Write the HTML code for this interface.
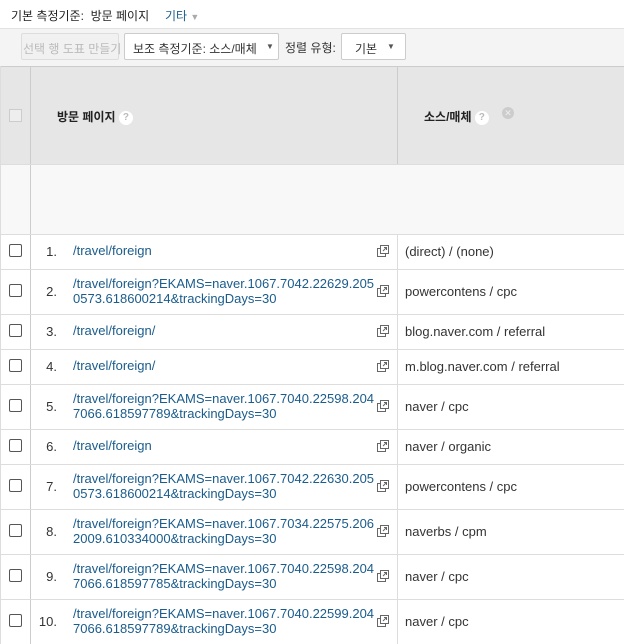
<!DOCTYPE html>
<html><head><meta charset="utf-8"><style>
*{margin:0;padding:0;box-sizing:border-box}
body{width:624px;height:644px;overflow:hidden;background:#fff;font-family:"Liberation Sans","Noto Sans CJK KR",sans-serif;font-size:13px;color:#222;position:relative}
.a{position:absolute;white-space:nowrap}
.kr{font-size:12px}
.cb{position:absolute;left:9px;width:13px;height:13px;border:1px solid #555;border-radius:2px;background:#fff}
.num{position:absolute;width:30px;text-align:right;left:27px;color:#333}
.lk{position:absolute;left:73px;color:#1a5c8c;line-height:15px;font-size:13px}
.src{position:absolute;left:405px;color:#333}
.ic{position:absolute;left:377px;width:12px;height:12px}
.hl{position:absolute;left:0;width:624px;height:1px;background:#ddd}
.btn{position:absolute;border:1px solid #ccc;border-radius:2px;background:#fff;height:27px;top:33px}
.q{display:inline-block;width:14px;height:14px;border-radius:50%;background:#fff;color:#bbb;font-size:10px;text-align:center;line-height:14px;vertical-align:middle}
</style></head><body>
<div class="a kr" style="left:11px;top:7px">기본 측정기준: &nbsp;<span style="color:#222">방문 페이지</span></div>
<div class="a kr" style="left:165px;top:7px;color:#1a5c8c">기타 <span style="color:#aaa;font-size:9px">▼</span></div>
<div class="a" style="left:0;top:28px;width:624px;height:1px;background:#e2e2e2"></div>
<div class="a" style="left:0;top:29px;width:624px;height:37px;background:#f4f4f4"></div>
<div class="btn" style="left:21px;width:98px;background:#f1f1f1;border-color:#ddd"><span class="a kr" style="left:1px;top:6px;color:#bbb">선택 행 도표 만들기</span></div>
<div class="btn" style="left:124px;width:155px"><span class="a kr" style="left:8px;top:6px;color:#333">보조 측정기준: 소스/매체</span><span class="a" style="left:141px;top:8px;font-size:8px;color:#555">▼</span></div>
<div class="a kr" style="left:285px;top:39px;color:#333">정렬 유형:</div>
<div class="btn" style="left:341px;width:65px"><span class="a kr" style="left:13px;top:6px;color:#333">기본</span><span class="a" style="left:45px;top:8px;font-size:8px;color:#555">▼</span></div>
<div class="a" style="left:0;top:66px;width:624px;height:98px;background:#e6e6e6;border-top:1px solid #ccc"></div>
<div class="a" style="left:0;top:164px;width:624px;height:70px;background:#f8f8f8"></div>
<div class="a" style="left:0;top:66px;width:1px;height:578px;background:#ddd"></div>
<div class="a" style="left:30px;top:66px;width:1px;height:578px;background:#ccc"></div>
<div class="a" style="left:397px;top:66px;width:1px;height:98px;background:#ccc"></div>
<div class="a" style="left:397px;top:234px;width:1px;height:410px;background:#ddd"></div>
<div class="a" style="left:9px;top:109px;width:13px;height:13px;border:1px solid #ccc;background:#eee"></div>
<div class="a kr" style="left:57px;top:108px;font-weight:bold;color:#222">방문 페이지 <span class="q">?</span></div>
<div class="a kr" style="left:424px;top:108px;font-weight:bold;color:#222">소스/매체 <span class="q">?</span></div>
<div class="a" style="left:502px;top:107px;width:12px;height:12px;border-radius:50%;background:#ccc;color:#eee;font-size:9px;text-align:center;line-height:12px">✕</div>
<div class="hl" style="top:164px"></div>
<div class="hl" style="top:234px"></div>
<div class="hl" style="top:269px"></div><div class="hl" style="top:314px"></div><div class="hl" style="top:349px"></div><div class="hl" style="top:384px"></div><div class="hl" style="top:429px"></div><div class="hl" style="top:464px"></div><div class="hl" style="top:509px"></div><div class="hl" style="top:554px"></div><div class="hl" style="top:599px"></div>

<div class="cb" style="top:244px"></div><div class="num" style="top:244px">1.</div><div class="lk" style="top:243px">/travel/foreign</div><svg class="ic" style="top:245px" viewBox="0 0 12 12"><rect x="0.5" y="3.5" width="8" height="8" fill="#fff" stroke="#666"/><rect x="3.5" y="0.5" width="8" height="8" fill="#fff" stroke="#666"/><path d="M6 6L9.5 2.5M7 2.5h2.5V5" stroke="#666" fill="none"/></svg><div class="src" style="top:244px">(direct) / (none)</div>

<div class="cb" style="top:284px"></div><div class="num" style="top:284px">2.</div><div class="lk" style="top:276px">/travel/foreign?EKAMS=naver.1067.7042.22629.205<br>0573.618600214&amp;trackingDays=30</div><svg class="ic" style="top:285px" viewBox="0 0 12 12"><rect x="0.5" y="3.5" width="8" height="8" fill="#fff" stroke="#666"/><rect x="3.5" y="0.5" width="8" height="8" fill="#fff" stroke="#666"/><path d="M6 6L9.5 2.5M7 2.5h2.5V5" stroke="#666" fill="none"/></svg><div class="src" style="top:284px">powercontens / cpc</div>

<div class="cb" style="top:324px"></div><div class="num" style="top:324px">3.</div><div class="lk" style="top:323px">/travel/foreign/</div><svg class="ic" style="top:325px" viewBox="0 0 12 12"><rect x="0.5" y="3.5" width="8" height="8" fill="#fff" stroke="#666"/><rect x="3.5" y="0.5" width="8" height="8" fill="#fff" stroke="#666"/><path d="M6 6L9.5 2.5M7 2.5h2.5V5" stroke="#666" fill="none"/></svg><div class="src" style="top:324px">blog.naver.com / referral</div>

<div class="cb" style="top:359px"></div><div class="num" style="top:359px">4.</div><div class="lk" style="top:358px">/travel/foreign/</div><svg class="ic" style="top:360px" viewBox="0 0 12 12"><rect x="0.5" y="3.5" width="8" height="8" fill="#fff" stroke="#666"/><rect x="3.5" y="0.5" width="8" height="8" fill="#fff" stroke="#666"/><path d="M6 6L9.5 2.5M7 2.5h2.5V5" stroke="#666" fill="none"/></svg><div class="src" style="top:359px">m.blog.naver.com / referral</div>

<div class="cb" style="top:399px"></div><div class="num" style="top:399px">5.</div><div class="lk" style="top:391px">/travel/foreign?EKAMS=naver.1067.7040.22598.204<br>7066.618597789&amp;trackingDays=30</div><svg class="ic" style="top:400px" viewBox="0 0 12 12"><rect x="0.5" y="3.5" width="8" height="8" fill="#fff" stroke="#666"/><rect x="3.5" y="0.5" width="8" height="8" fill="#fff" stroke="#666"/><path d="M6 6L9.5 2.5M7 2.5h2.5V5" stroke="#666" fill="none"/></svg><div class="src" style="top:399px">naver / cpc</div>

<div class="cb" style="top:439px"></div><div class="num" style="top:439px">6.</div><div class="lk" style="top:438px">/travel/foreign</div><svg class="ic" style="top:440px" viewBox="0 0 12 12"><rect x="0.5" y="3.5" width="8" height="8" fill="#fff" stroke="#666"/><rect x="3.5" y="0.5" width="8" height="8" fill="#fff" stroke="#666"/><path d="M6 6L9.5 2.5M7 2.5h2.5V5" stroke="#666" fill="none"/></svg><div class="src" style="top:439px">naver / organic</div>

<div class="cb" style="top:479px"></div><div class="num" style="top:479px">7.</div><div class="lk" style="top:471px">/travel/foreign?EKAMS=naver.1067.7042.22630.205<br>0573.618600214&amp;trackingDays=30</div><svg class="ic" style="top:480px" viewBox="0 0 12 12"><rect x="0.5" y="3.5" width="8" height="8" fill="#fff" stroke="#666"/><rect x="3.5" y="0.5" width="8" height="8" fill="#fff" stroke="#666"/><path d="M6 6L9.5 2.5M7 2.5h2.5V5" stroke="#666" fill="none"/></svg><div class="src" style="top:479px">powercontens / cpc</div>

<div class="cb" style="top:524px"></div><div class="num" style="top:524px">8.</div><div class="lk" style="top:516px">/travel/foreign?EKAMS=naver.1067.7034.22575.206<br>2009.610334000&amp;trackingDays=30</div><svg class="ic" style="top:525px" viewBox="0 0 12 12"><rect x="0.5" y="3.5" width="8" height="8" fill="#fff" stroke="#666"/><rect x="3.5" y="0.5" width="8" height="8" fill="#fff" stroke="#666"/><path d="M6 6L9.5 2.5M7 2.5h2.5V5" stroke="#666" fill="none"/></svg><div class="src" style="top:524px">naverbs / cpm</div>

<div class="cb" style="top:569px"></div><div class="num" style="top:569px">9.</div><div class="lk" style="top:561px">/travel/foreign?EKAMS=naver.1067.7040.22598.204<br>7066.618597785&amp;trackingDays=30</div><svg class="ic" style="top:570px" viewBox="0 0 12 12"><rect x="0.5" y="3.5" width="8" height="8" fill="#fff" stroke="#666"/><rect x="3.5" y="0.5" width="8" height="8" fill="#fff" stroke="#666"/><path d="M6 6L9.5 2.5M7 2.5h2.5V5" stroke="#666" fill="none"/></svg><div class="src" style="top:569px">naver / cpc</div>

<div class="cb" style="top:614px"></div><div class="num" style="top:614px">10.</div><div class="lk" style="top:606px">/travel/foreign?EKAMS=naver.1067.7040.22599.204<br>7066.618597789&amp;trackingDays=30</div><svg class="ic" style="top:615px" viewBox="0 0 12 12"><rect x="0.5" y="3.5" width="8" height="8" fill="#fff" stroke="#666"/><rect x="3.5" y="0.5" width="8" height="8" fill="#fff" stroke="#666"/><path d="M6 6L9.5 2.5M7 2.5h2.5V5" stroke="#666" fill="none"/></svg><div class="src" style="top:614px">naver / cpc</div>
</body></html>
